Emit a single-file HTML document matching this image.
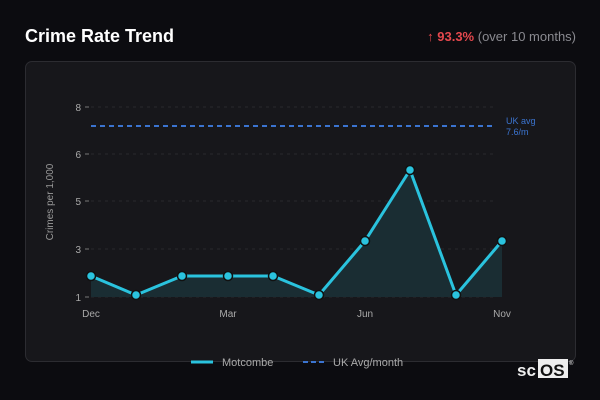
<!DOCTYPE html>
<html><head><style>
body{margin:0;width:600px;height:400px;background:#0c0c10;font-family:"Liberation Sans",sans-serif;overflow:hidden;position:relative}
.t{position:absolute;left:25px;top:26px;color:#fff;font-weight:bold;font-size:18px}
.r{position:absolute;right:24px;top:29px;font-size:13px;color:#8a8a90}
.r b{color:#e5484d}
.card{position:absolute;left:25px;top:61px;width:549px;height:299px;background:#17171b;border:1px solid #2c2c31;border-radius:7px}
svg{position:absolute;left:0;top:0}
</style></head><body>
<div class="t">Crime Rate Trend</div>
<div class="r"><b>↑ 93.3%</b> (over 10 months)</div>
<div class="card"></div>
<svg width="600" height="400" font-family="Liberation Sans, sans-serif">
<g stroke="#28282d" stroke-dasharray="3,4" stroke-width="1">
<line x1="91" y1="107" x2="496" y2="107"/><line x1="91" y1="154" x2="496" y2="154"/><line x1="91" y1="201" x2="496" y2="201"/><line x1="91" y1="249" x2="496" y2="249"/><line x1="91" y1="297" x2="496" y2="297"/>
</g>
<g fill="#aaa" font-size="10" text-anchor="end">
<text x="81" y="111">8</text><text x="81" y="158">6</text><text x="81" y="205">5</text><text x="81" y="253">3</text><text x="81" y="301">1</text>
</g>
<g stroke="#777" stroke-width="1"><line x1="85" y1="107" x2="89" y2="107"/><line x1="85" y1="154" x2="89" y2="154"/><line x1="85" y1="201" x2="89" y2="201"/><line x1="85" y1="249" x2="89" y2="249"/><line x1="85" y1="297" x2="89" y2="297"/></g>
<text x="53" y="202" fill="#999" font-size="10" text-anchor="middle" transform="rotate(-90 53 202)">Crimes per 1,000</text>
<g fill="#aaa" font-size="10" text-anchor="middle">
<text x="91" y="317">Dec</text><text x="228" y="317">Mar</text><text x="365" y="317">Jun</text><text x="502" y="317">Nov</text>
</g>
<line x1="91" y1="126" x2="496" y2="126" stroke="#3b74d0" stroke-width="2" stroke-dasharray="5,4"/>
<text x="506" y="124" fill="#3b74d0" font-size="9">UK avg</text>
<text x="506" y="135" fill="#3b74d0" font-size="9">7.6/m</text>
<polygon points="91,276 136,295 182,276 228,276 273,276 319,295 365,241 410,170 456,295 502,241 502,297 91,297" fill="#1a2d33"/>
<polyline points="91,276 136,295 182,276 228,276 273,276 319,295 365,241 410,170 456,295 502,241" fill="none" stroke="#2ac3de" stroke-width="3" stroke-linejoin="round"/>
<g fill="#2ac3de" stroke="#111" stroke-width="1.5">
<circle cx="91" cy="276" r="4.5"/><circle cx="136" cy="295" r="4.5"/><circle cx="182" cy="276" r="4.5"/><circle cx="228" cy="276" r="4.5"/><circle cx="273" cy="276" r="4.5"/><circle cx="319" cy="295" r="4.5"/><circle cx="365" cy="241" r="4.5"/><circle cx="410" cy="170" r="4.5"/><circle cx="456" cy="295" r="4.5"/><circle cx="502" cy="241" r="4.5"/>
</g>
<line x1="191" y1="362" x2="213" y2="362" stroke="#2ac3de" stroke-width="3"/>
<text x="222" y="366" fill="#aaa" font-size="11">Motcombe</text>
<line x1="303" y1="362" x2="325" y2="362" stroke="#3b74d0" stroke-width="2" stroke-dasharray="5,3"/>
<text x="333" y="366" fill="#aaa" font-size="11">UK Avg/month</text>
<text x="517" y="376" fill="#eee" font-size="17" font-weight="bold">sc</text>
<rect x="538" y="359" width="30" height="19" fill="#eee"/>
<text x="540" y="376" fill="#111" font-size="17" font-weight="bold">OS</text>
<text x="569" y="365" fill="#eee" font-size="6">®</text>
</svg>
</body></html>
